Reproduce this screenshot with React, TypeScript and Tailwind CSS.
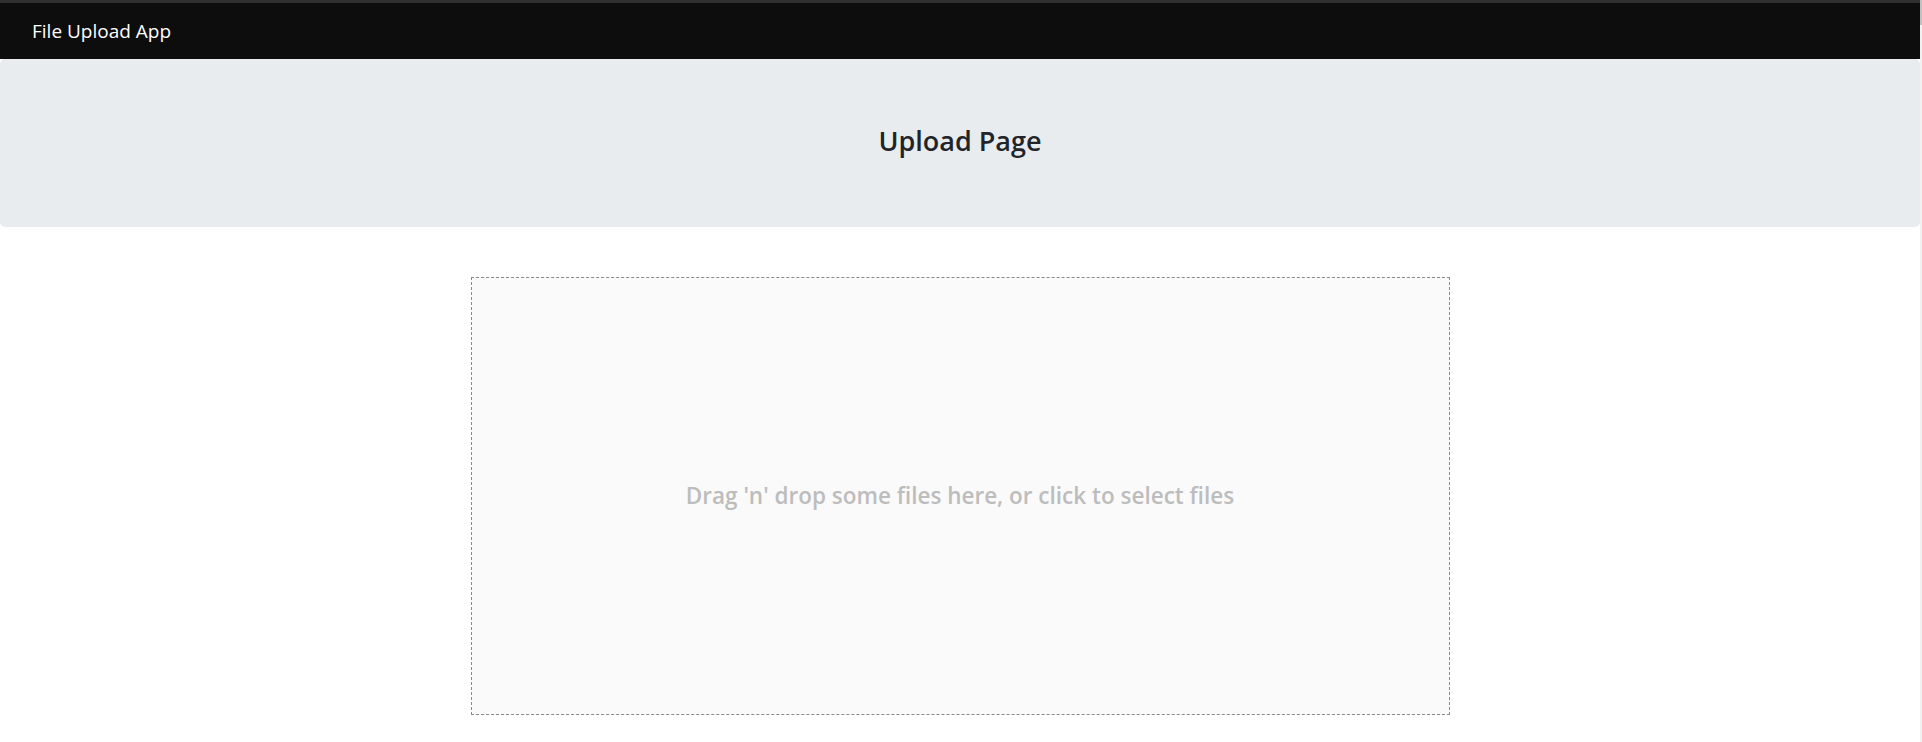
export default function App() {
  return (
    <div className="flex min-h-[742px] w-full bg-white font-['Open_Sans','Noto_Sans',sans-serif]">
      <div className="flex-1 flex flex-col">
        <div className="h-[3px] bg-[#2f2f2f]" />
        <nav className="h-[56px] bg-[#0d0d0d] flex items-center px-[32px]">
          <span className="text-[19px] text-white leading-none">File Upload App</span>
        </nav>
        <header className="h-[168px] bg-[#e9ecef] rounded-[5px] flex items-center justify-center">
          <h3 className="text-[27px] font-semibold text-[#212529] mb-[4px]">Upload Page</h3>
        </header>
        <main className="flex justify-center pt-[50px]">
          <div className="w-[979px] h-[438px] border border-dashed border-[#8a8a8a] bg-[#fafafa] flex items-center justify-center">
            <p className="text-[22.5px] font-semibold text-[#bdbdbd] leading-tight">
              Drag 'n' drop some files here, or click to select files
            </p>
          </div>
        </main>
      </div>
      <div className="w-[2px] flex flex-col bg-[#f1f1f1]">
        <div className="h-[25px] bg-[#c1c1c1]" />
      </div>
    </div>
  );
}
